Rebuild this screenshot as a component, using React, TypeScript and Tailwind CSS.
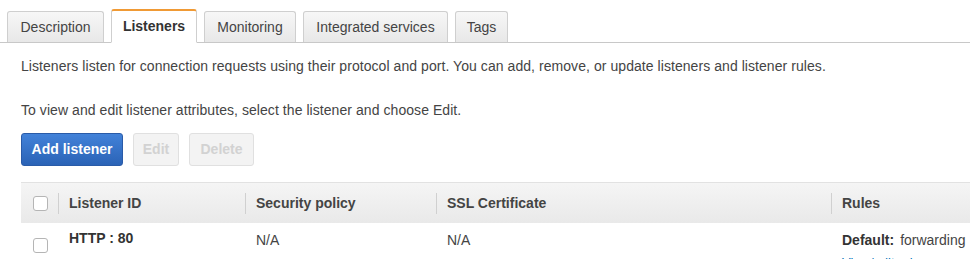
import React from 'react'

const tabs = [
  { label: 'Description', width: 'w-[97px]' },
  { label: 'Listeners', width: 'w-[86px]', active: true },
  { label: 'Monitoring', width: 'w-[92px]' },
  { label: 'Integrated services', width: 'w-[145px]' },
  { label: 'Tags', width: 'w-[53px]' },
]

function Checkbox() {
  return <span className="block h-[15px] w-[15px] rounded-[3px] border border-[#b5b5b5] bg-white" />
}

function HeaderCell({ label, className }: { label: string; className: string }) {
  return (
    <div className={`flex h-full shrink-0 items-center ${className}`}>
      <span className="h-[21px] w-px bg-[#d0d0d0]" />
      <span className="pl-[10px] font-bold text-[#444]">{label}</span>
    </div>
  )
}

export default function App() {
  return (
    <div className="h-[259px] w-[970px] overflow-hidden bg-white text-[14px] text-[#444]" style={{ fontFamily: '"Liberation Sans", Arial, sans-serif' }}>
      <div className="flex items-end gap-[7px] border-b border-[#c8c8c8] px-[7px] pt-[9px]">
        {tabs.map((tab) =>
          tab.active ? (
            <div
              key={tab.label}
              className={`-mb-px flex h-[34px] ${tab.width} items-center justify-center rounded-t-[3px] border border-t-2 border-[#cfcfcf] border-t-[#f09a35] border-b-white bg-white font-bold text-[#333]`}
            >
              {tab.label}
            </div>
          ) : (
            <div
              key={tab.label}
              className={`flex h-[31px] ${tab.width} items-center justify-center rounded-t-[3px] border border-b-0 border-[#cfcfcf] bg-gradient-to-b from-[#f7f7f7] to-[#e8e8e8] text-[#444]`}
            >
              {tab.label}
            </div>
          ),
        )}
      </div>

      <div className="pl-[21px] tracking-[0.06px]">
        <p className="mt-[13px] leading-[20px]">
          Listeners listen for connection requests using their protocol and port. You can add, remove, or update listeners and listener rules.
        </p>
        <p className="mt-[24px] leading-[20px]">To view and edit listener attributes, select the listener and choose Edit.</p>

        <div className="mt-[13px] flex gap-[10px] tracking-normal">
          <button className="h-[33px] w-[102px] rounded-[3px] border border-[#2a5ba8] bg-gradient-to-b from-[#4282d9] to-[#2b63b6] font-bold text-white">
            Add listener
          </button>
          <button className="h-[33px] w-[46px] rounded-[3px] border border-[#e0e0e0] bg-[#f3f3f3] font-bold text-[#d2d2d2]">Edit</button>
          <button className="h-[33px] w-[65px] rounded-[3px] border border-[#e0e0e0] bg-[#f3f3f3] font-bold text-[#d2d2d2]">Delete</button>
        </div>

        <div className="mt-[16px] w-[980px] tracking-normal">
          <div className="flex h-[41px] items-center border-t border-[#e2e2e2] bg-gradient-to-b from-[#f5f5f5] to-[#e9e9e9]">
            <div className="flex w-[37px] shrink-0 justify-center pl-[2px]">
              <Checkbox />
            </div>
            <HeaderCell label="Listener ID" className="w-[187px]" />
            <HeaderCell label="Security policy" className="w-[191px]" />
            <HeaderCell label="SSL Certificate" className="w-[395px]" />
            <HeaderCell label="Rules" className="w-[140px]" />
          </div>

          <div className="flex pt-[6px]">
            <div className="flex w-[37px] shrink-0 justify-center pl-[2px] pt-[9px]">
              <Checkbox />
            </div>
            <div className="w-[187px] shrink-0 pl-[11px]">
              <div className="font-bold leading-[18px] text-[#333]">HTTP : 80</div>
              <div className="mt-[9px] pl-[21px] text-[13px] leading-[16px] text-[#777]">arn...3f392563ff3933b</div>
            </div>
            <div className="w-[191px] shrink-0 pl-[11px] pt-[2px] leading-[18px]">N/A</div>
            <div className="w-[395px] shrink-0 pl-[11px] pt-[2px] leading-[18px]">N/A</div>
            <div className="shrink-0 pl-[11px] pt-[2px]">
              <div className="leading-[18px]">
                <span className="font-bold text-[#333]">Default:</span>
                <span className="ml-[6px]">forwarding</span>
              </div>
              <div className="mt-[6px] text-[13px] leading-[16px] text-[#0073bb]">View/edit rules</div>
            </div>
          </div>
        </div>
      </div>
    </div>
  )
}
